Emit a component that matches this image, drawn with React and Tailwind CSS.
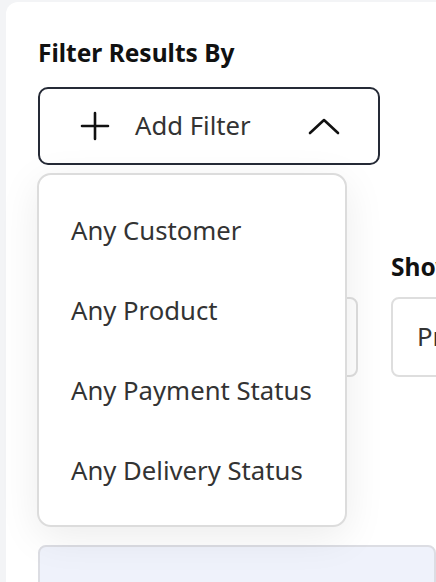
import React from "react";

const filters = ["Any Customer", "Any Product", "Any Payment Status", "Any Delivery Status"];

function PlusIcon() {
  return (
    <svg width="30" height="30" viewBox="0 0 30 30" fill="none" stroke="#111" strokeWidth="2.6" strokeLinecap="round">
      <path d="M15 2v26M2 15h26" />
    </svg>
  );
}

function ChevronUp() {
  return (
    <svg width="32" height="18" viewBox="0 0 32 18" fill="none" stroke="#111" strokeWidth="2.6" strokeLinecap="round" strokeLinejoin="round">
      <path d="M2 16L16 3l14 13" />
    </svg>
  );
}

export default function App() {
  return (
    <div className="h-[582px] overflow-hidden bg-[#f3f4f6] pl-[6px] pt-[2px]" style={{ fontFamily: '"Noto Sans", "Open Sans", sans-serif' }}>
      <div className="relative h-[600px] rounded-tl-xl bg-white pl-8 pt-[36px]">
        <h2 className="text-[24.5px] font-bold leading-[30px] text-[#111]">Filter Results By</h2>

        <div className="relative mt-[19px]">
          <button className="flex h-[78px] w-[342px] items-center rounded-[10px] border-2 border-[#252a36] pl-[40px] pr-[38px]">
            <PlusIcon />
            <span className="ml-[25px] text-[25.7px] text-[#333]">Add Filter</span>
            <span className="ml-auto">
              <ChevronUp />
            </span>
          </button>

          <div className="absolute left-[-1px] top-[86px] z-10 w-[310px] rounded-[14px] border-2 border-[#dcdcdc] bg-white pb-[14px] pt-[16px] shadow-[0_10px_40px_rgba(0,0,0,0.08)]">
            {filters.map((f) => (
              <div key={f} className="flex h-20 items-center pl-[32px] text-[25.7px] text-[#333]">
                {f}
              </div>
            ))}
          </div>
        </div>

        <div className="mt-[87px] flex gap-[33px]">
          <div className="w-[320px] shrink-0">
            <div className="h-[30px]" />
            <div className="mt-[15px] h-20 rounded-lg border-2 border-[#dedede]" />
          </div>
          <div className="w-[320px] shrink-0">
            <div className="whitespace-nowrap text-[24.5px] font-bold leading-[30px] text-[#111]">Show Product</div>
            <div className="mt-[15px] flex h-20 items-center rounded-lg border-2 border-[#dedede] px-6 text-[25.7px] text-[#333]">
              Products
            </div>
          </div>
        </div>

        <div className="mt-[168px] h-20 rounded-lg border-2 border-[#dcdde3] bg-[#eff2fb]" />
      </div>
    </div>
  );
}
